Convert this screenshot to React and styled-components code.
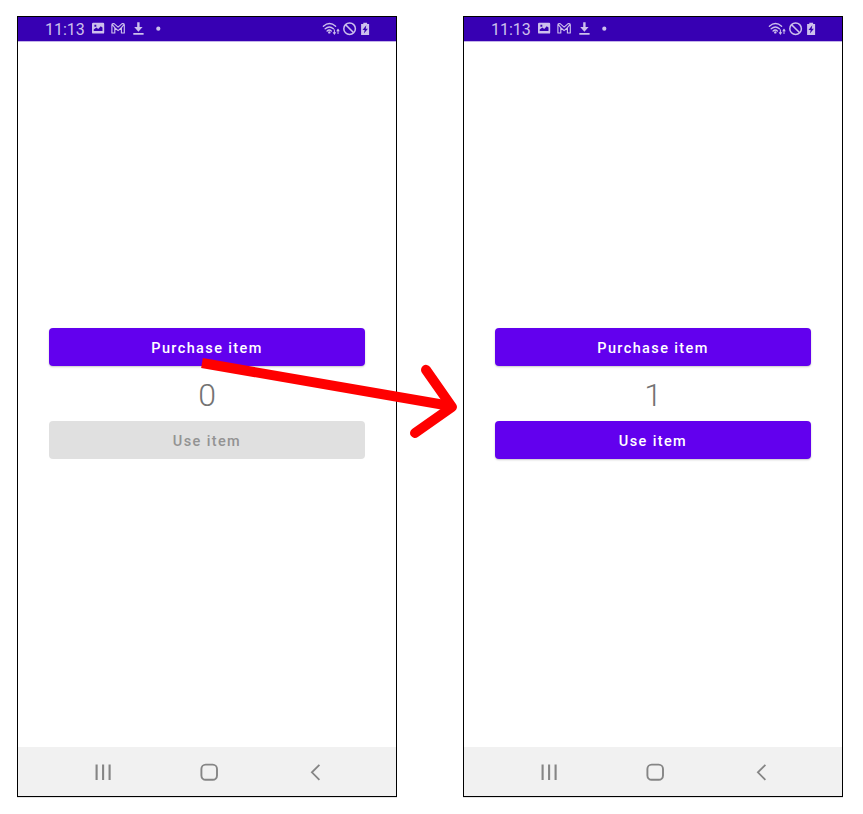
import React from "react";
import styled, { createGlobalStyle } from "styled-components";

const GlobalStyle = createGlobalStyle`
  body { margin: 0; background: #fff; font-family: Roboto, "Liberation Sans", sans-serif; }
`;

const Stage = styled.main`
  position: relative;
  box-sizing: border-box;
  width: 863px;
  height: 814px;
  padding: 16px 0 0 17px;
  display: flex;
  align-items: flex-start;
  gap: 66px;
  overflow: hidden;
`;

const Phone = styled.section`
  box-sizing: border-box;
  width: 380px;
  height: 781px;
  border: 1px solid #000;
  display: flex;
  flex-direction: column;
  background: #fff;
  box-shadow: 0 1px 0 #e4e4e4;
`;

const StatusBar = styled.header`
  box-sizing: border-box;
  height: 25px;
  flex: none;
  padding: 0 25px 0 27px;
  display: flex;
  align-items: center;
  justify-content: space-between;
  background: #3700b3;
  border-bottom: 1px solid #c3b3e8;
  color: #cdc0ec;
`;

const StatusGroup = styled.div`
  display: flex;
  align-items: center;
`;

const Clock = styled.span`
  width: 44px;
  padding-top: 1px;
  font-size: 16px;
  line-height: 24px;
  white-space: nowrap;
`;

const Glyphs = styled.svg`
  display: block;
  flex: none;
`;

const Content = styled.div`
  flex: 1;
  box-sizing: border-box;
  padding: 286.4px 30.6px 0;
  display: flex;
  flex-direction: column;
`;

const ActionButton = styled.button`
  box-sizing: border-box;
  height: 38px;
  flex: none;
  padding: 3px 0 0;
  border: 0;
  border-radius: 4px;
  font: 480 14.5px/35px Roboto, "Liberation Sans", sans-serif;
  letter-spacing: 1.38px;
  color: ${(p) => (p.disabled ? "#939393" : "#fff")};
  background: ${(p) => (p.disabled ? "#e0e0e0" : "#6200ee")};
  box-shadow: ${(p) => (p.disabled ? "none" : "0 1px 2px rgba(0, 0, 0, 0.22)")};
`;

const Count = styled.div`
  height: 55px;
  line-height: 59px;
  font-size: 32px;
  font-weight: 360;
  text-align: center;
  color: #737373;
`;

const NavBar = styled.nav`
  height: 49px;
  flex: none;
  padding: 0 75px 0 76px;
  display: flex;
  align-items: center;
  justify-content: space-between;
  background: #f1f1f1;
  color: #858585;
`;

const Arrow = styled.svg`
  position: absolute;
  left: 196px;
  top: 352px;
  pointer-events: none;
`;

function Notifications() {
  return (
    <Glyphs width="76" height="24" viewBox="89 17 76 24" fill="none" stroke="currentColor">
      <path
        fill="currentColor"
        stroke="none"
        fillRule="evenodd"
        d="M93.2 22.8h9.8q1.2 0 1.2 1.2v8.4q0 1.2-1.2 1.2h-9.8q-1.2 0-1.2-1.2v-8.4q0-1.2 1.2-1.2zM93.7 30.9h8.8v-3.3l-1.8-1.3-2.5 2.6-1.8-1.3-2.7 1.8zM94.4 24.8v1.9h1.9v-1.9z"
      />
      <path
        strokeWidth="1.15"
        strokeLinejoin="round"
        d="M111.9 33V24.8q0-1.2 1.2-1.2h1l4 3.5 4-3.5h1q1.2 0 1.2 1.2V33h-2.9v-5.3l-3.3 2.9-3.3-2.9V33zM112.2 24.5l2.6 3.2M124 24.5l-2.6 3.2"
      />
      <path fill="currentColor" stroke="none" d="M137.2 22.2h2.4v4.8h3l-4.2 4.8-4.2-4.8h3zM133.3 33h10.3v1.8h-10.3z" />
      <circle cx="158.3" cy="28.7" r="2.1" fill="currentColor" stroke="none" />
    </Glyphs>
  );
}

function Connectivity() {
  return (
    <Glyphs width="50" height="24" viewBox="321 17 50 24" fill="none" stroke="currentColor">
      <path strokeWidth="1.4" strokeLinecap="round" d="M323.4 26.2q6.1-5.4 12.2 0M325.2 28.7q4.2-3.6 8.2 0M327.1 31q2.2-1.8 4.2 0" />
      <circle cx="329.3" cy="32.4" r="1.2" fill="currentColor" stroke="none" />
      <path strokeWidth="1" d="M334.4 29.4v4.6M338 34v-4.5" />
      <path fill="currentColor" stroke="none" d="M332.6 32.3h3.6l-1.8 2.6zM336.2 31.2h3.6l-1.8-2.6z" />
      <circle cx="349.6" cy="28.7" r="5.8" strokeWidth="1.5" />
      <path strokeWidth="1.5" d="M345.5 24.6l8.2 8.2" />
      <path fill="currentColor" stroke="none" d="M363.3 22.8h3.8v1.3h2v11h-8v-11h2.2z" />
      <path fill="#3700b3" stroke="none" d="M366.3 25.3l-3.8 4.7h2.2l-.8 3.6 4-4.8h-2.2z" />
    </Glyphs>
  );
}

function NavIcons() {
  return (
    <>
      <Glyphs width="18" height="20" viewBox="94 762 18 20" stroke="currentColor" strokeWidth="2.1">
        <path d="M96.6 764.5v15.6M103.1 764.5v15.6M109.6 764.5v15.6" />
      </Glyphs>
      <Glyphs width="21" height="20" viewBox="200 762 21 20" fill="none" stroke="currentColor" strokeWidth="1.9">
        <rect x="201.4" y="764.6" width="15.6" height="15.2" rx="4.3" />
      </Glyphs>
      <Glyphs width="12" height="20" viewBox="309 762 12 20" fill="none" stroke="currentColor" strokeWidth="1.8">
        <path d="M319.4 764.8l-7.5 7.5 7.5 7.5" />
      </Glyphs>
    </>
  );
}

function PhoneScreen({ count }) {
  return (
    <Phone>
      <StatusBar>
        <StatusGroup>
          <Clock>11:13</Clock>
          <Notifications />
        </StatusGroup>
        <Connectivity />
      </StatusBar>
      <Content>
        <ActionButton>Purchase item</ActionButton>
        <Count>{count}</Count>
        <ActionButton disabled={count === 0}>Use item</ActionButton>
      </Content>
      <NavBar>
        <NavIcons />
      </NavBar>
    </Phone>
  );
}

export default function App() {
  return (
    <>
      <GlobalStyle />
      <Stage>
        <PhoneScreen count={0} />
        <PhoneScreen count={1} />
        <Arrow width="270" height="92" viewBox="196 352 270 92" fill="none" stroke="#f00" strokeWidth="10">
          <path d="M202 363L452 406.3" />
          <path strokeLinecap="round" strokeLinejoin="round" d="M426 369.8L452 407L415 433" />
        </Arrow>
      </Stage>
    </>
  );
}
